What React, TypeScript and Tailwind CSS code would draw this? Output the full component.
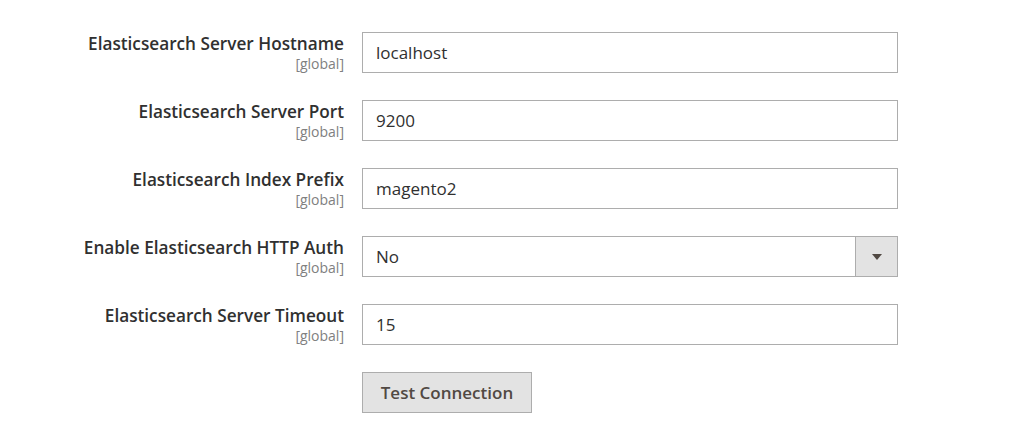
import React from "react";

const rows: { label: string; value: string; select?: boolean }[] = [
  { label: "Elasticsearch Server Hostname", value: "localhost" },
  { label: "Elasticsearch Server Port", value: "9200" },
  { label: "Elasticsearch Index Prefix", value: "magento2" },
  { label: "Enable Elasticsearch HTTP Auth", value: "No", select: true },
  { label: "Elasticsearch Server Timeout", value: "15" },
];

export default function App() {
  return (
    <div
      className="w-[1024px] h-[430px] bg-white text-[#303030]"
      style={{ fontFamily: '"Open Sans", sans-serif' }}
    >
      <div className="pt-[32px] flex flex-col gap-[27px]">
        {rows.map((r) => (
          <div key={r.label} className="flex">
            <div className="w-[344px] shrink-0 flex flex-col items-end">
              <div className="text-[17.2px] leading-[23px] font-semibold text-[#303030]">{r.label}</div>
              <div className="text-[14px] leading-[17px] text-[#808080]">[global]</div>
            </div>
            <div className="ml-[18px] w-[536px] h-[41px] border border-[#adadad] bg-white flex items-center">
              <span className="pl-[13px] text-[17px] text-[#303030] flex-1">{r.value}</span>
              {r.select && (
                <div className="w-[42px] h-full bg-[#e3e3e3] border-l border-[#adadad] flex items-center justify-center">
                  <svg width="10" height="6" viewBox="0 0 10 6">
                    <path d="M0 0 L10 0 L5 6 Z" fill="#514943" />
                  </svg>
                </div>
              )}
            </div>
          </div>
        ))}
        <div className="flex">
          <div className="w-[344px] shrink-0" />
          <button className="ml-[18px] w-[170px] h-[41px] bg-[#e3e3e3] border border-[#adadad] text-[17px] font-semibold text-[#514943]">
            Test Connection
          </button>
        </div>
      </div>
    </div>
  );
}
